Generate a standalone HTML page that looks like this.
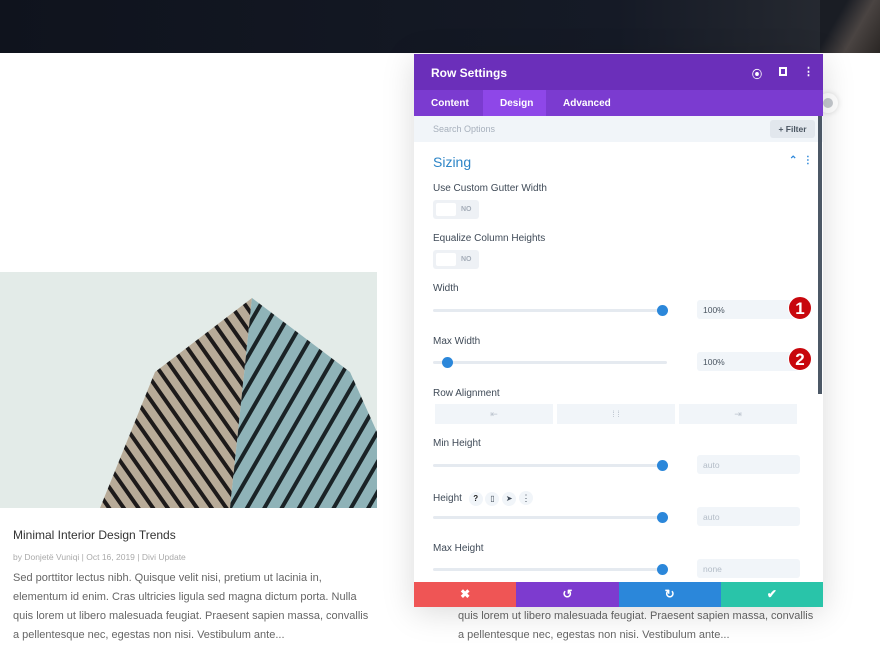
<!DOCTYPE html>
<html><head><meta charset="utf-8"><style>
*{margin:0;padding:0;box-sizing:border-box}
body{width:880px;height:654px;overflow:hidden;background:#fff;font-family:"Liberation Sans",sans-serif;position:relative}
.abs{position:absolute}
.hdr{left:0;top:0;width:880px;height:53px;background:linear-gradient(90deg,#0f131d,#151a26 70%,#2a2d33)}
.txt{color:#666;font-size:11px;line-height:19px}
.modal{left:414px;top:54px;width:409px;height:553px;background:#fff;box-shadow:0 5px 30px rgba(0,0,0,.15);overflow:hidden}
.mh{height:36px;background:#6b2fba;color:#fff;font-weight:bold;font-size:12px;padding:12px 0 0 17px;position:relative}
.tabs{height:26px;background:#7b3bd0;position:relative;font-size:10px;font-weight:bold;color:#fff}
.tabs span{position:absolute;top:8px}
.search{height:26px;background:#f1f5f9;position:relative;font-size:9px;color:#a7b0bc}
.lbl{position:absolute;left:19px;font-size:10px;color:#3f4a57}
.tog{position:absolute;left:19px;width:46px;height:19px;background:#eef1f5;border-radius:3px}
.tog i{position:absolute;left:3px;top:3px;width:20px;height:13px;background:#fff;border-radius:2px}
.tog b{position:absolute;left:28px;top:6px;font-size:7px;color:#a5adb8}
.track{position:absolute;left:19px;width:234px;height:3px;background:#e5eaf0;border-radius:2px}
.knob{position:absolute;width:11px;height:11px;border-radius:50%;background:#2b87da}
.inp{position:absolute;left:283px;width:103px;height:19px;background:#f1f5f9;border-radius:3px;font-size:8.5px;color:#4a5561;padding:5px 6px}
.inp.g{color:#b3bcc7}
.badge{position:absolute;width:24px;height:24px;border-radius:50%;background:#c8070d;color:#fff;font-weight:bold;font-size:17px;text-align:center;line-height:24px;border:1px solid #fff}
.al{position:absolute;top:350px;width:118px;height:20px;background:#f1f5f9;font-size:9px;color:#bcc4ce;text-align:center;line-height:20px}
.btns{position:absolute;left:0;top:528px;width:409px;height:25px;display:flex}
.btns div{flex:1;color:#fff;font-weight:bold;text-align:center;line-height:25px;font-size:12px}
</style></head><body>
<div class="abs hdr"></div>
<div class="abs" style="left:820px;top:0;width:60px;height:53px;background:linear-gradient(120deg,#1a1d24 30%,#4a4442 60%,#2a2624)"></div>
<svg class="abs" style="left:0;top:272px" width="377" height="236" viewBox="0 0 377 236">
<defs><pattern id="s1" width="12" height="12" patternUnits="userSpaceOnUse" patternTransform="rotate(-35)"><rect width="12" height="12" fill="#b8ab98"/><rect width="4" height="12" fill="#1d1a1a"/></pattern>
<pattern id="s2" width="15" height="15" patternUnits="userSpaceOnUse" patternTransform="rotate(30)"><rect width="15" height="15" fill="#8fb3b8"/><rect width="4" height="15" fill="#1a2326"/></pattern></defs>
<rect width="377" height="236" fill="#e3ebe8"/>
<polygon points="100,236 155,100 252,26 230,236" fill="url(#s1)"/>
<polygon points="230,236 252,26 350,100 377,160 377,236" fill="url(#s2)"/>
</svg>
<div class="abs" style="left:13px;top:528px;font-size:12px;color:#333">Minimal Interior Design Trends</div>
<div class="abs" style="left:13px;top:552px;font-size:8.5px;color:#aaa">by Donjetë Vuniqi | Oct 16, 2019 | Divi Update</div>
<div class="abs txt" style="left:13px;top:569px;width:360px">Sed porttitor lectus nibh. Quisque velit nisi, pretium ut lacinia in, elementum id enim. Cras ultricies ligula sed magna dictum porta. Nulla quis lorem ut libero malesuada feugiat. Praesent sapien massa, convallis a pellentesque nec, egestas non nisi. Vestibulum ante...</div>
<div class="abs txt" style="left:458px;top:607px;width:360px">quis lorem ut libero malesuada feugiat. Praesent sapien massa, convallis a pellentesque nec, egestas non nisi. Vestibulum ante...</div>
<div class="abs" style="left:818px;top:93px;width:20px;height:20px;border-radius:50%;background:#fff;box-shadow:0 0 6px rgba(0,0,0,.15)"><div style="margin:5px 0 0 5px;width:10px;height:10px;border-radius:50%;background:#c5c9ce"></div></div>
<div class="abs modal">
 <div class="mh">Row Settings
  <span style="position:absolute;left:338px;top:12px;font-size:10px">⦿</span>
  <span style="position:absolute;left:365px;top:13px;width:8px;height:9px;border:2px solid #fff"></span>
  <span style="position:absolute;left:389px;top:11px;font-size:11px">⋮</span>
 </div>
 <div class="tabs"><span style="left:17px">Content</span><div style="position:absolute;left:69px;top:0;width:63px;height:26px;background:#8e47e8"></div><span style="left:86px">Design</span><span style="left:149px">Advanced</span></div>
 <div class="search"><span style="position:absolute;left:19px;top:8px">Search Options</span><div style="position:absolute;left:356px;top:4px;width:45px;height:18px;background:#e2e7ed;border-radius:3px;color:#4a5561;font-weight:bold;font-size:8.5px;line-height:18px;text-align:center">+ Filter</div></div>
 <div style="position:absolute;left:19px;top:100px;font-size:14px;color:#2d85c7">Sizing</div>
 <div style="position:absolute;left:375px;top:101px;font-size:10px;color:#2b87da;font-weight:bold">⌃ &nbsp;⋮</div>
 <div style="position:absolute;left:404px;top:62px;width:4px;height:278px;background:#4c5866"></div>
 <div class="lbl" style="top:129px">Use Custom Gutter Width</div>
 <div class="tog" style="top:146px"><i></i><b>NO</b></div>
 <div class="lbl" style="top:179px">Equalize Column Heights</div>
 <div class="tog" style="top:196px"><i></i><b>NO</b></div>
 <div class="lbl" style="top:229px">Width</div>
 <div class="track" style="top:255px"></div><div class="knob" style="left:243px;top:251px"></div>
 <div class="inp" style="top:246px">100%</div><div class="badge" style="left:374px;top:242px">1</div>
 <div class="lbl" style="top:282px">Max Width</div>
 <div class="track" style="top:307px"></div><div class="knob" style="left:28px;top:303px"></div>
 <div class="inp" style="top:298px">100%</div><div class="badge" style="left:374px;top:293px">2</div>
 <div class="lbl" style="top:334px">Row Alignment</div>
 <div class="al" style="left:21px">⇤</div><div class="al" style="left:143px">⁞ ⁞</div><div class="al" style="left:265px">⇥</div>
 <div class="lbl" style="top:384px">Min Height</div>
 <div class="track" style="top:410px"></div><div class="knob" style="left:243px;top:406px"></div>
 <div class="inp g" style="top:401px">auto</div>
 <div class="lbl" style="top:437px">Height <span style="display:inline-block;width:14px;height:14px;border-radius:50%;background:#f1f5f9;text-align:center;margin-left:4px;color:#222;font-weight:bold;font-size:8px;line-height:14px">?</span> <span style="display:inline-block;width:14px;height:14px;border-radius:50%;background:#f1f5f9;text-align:center;font-size:8px;line-height:14px">▯</span> <span style="display:inline-block;width:14px;height:14px;border-radius:50%;background:#f1f5f9;text-align:center;font-size:8px;line-height:14px">➤</span> <span style="display:inline-block;width:14px;height:14px;border-radius:50%;background:#f1f5f9;text-align:center;font-size:9px;line-height:14px">⋮</span></div>
 <div class="track" style="top:462px"></div><div class="knob" style="left:243px;top:458px"></div>
 <div class="inp g" style="top:453px">auto</div>
 <div class="lbl" style="top:489px">Max Height</div>
 <div class="track" style="top:514px"></div><div class="knob" style="left:243px;top:510px"></div>
 <div class="inp g" style="top:505px">none</div>
 <div class="btns"><div style="background:#ef5555">✖</div><div style="background:#7d3bcf">↺</div><div style="background:#2b87da">↻</div><div style="background:#29c4a9">✔</div></div>
</div>
</body></html>
